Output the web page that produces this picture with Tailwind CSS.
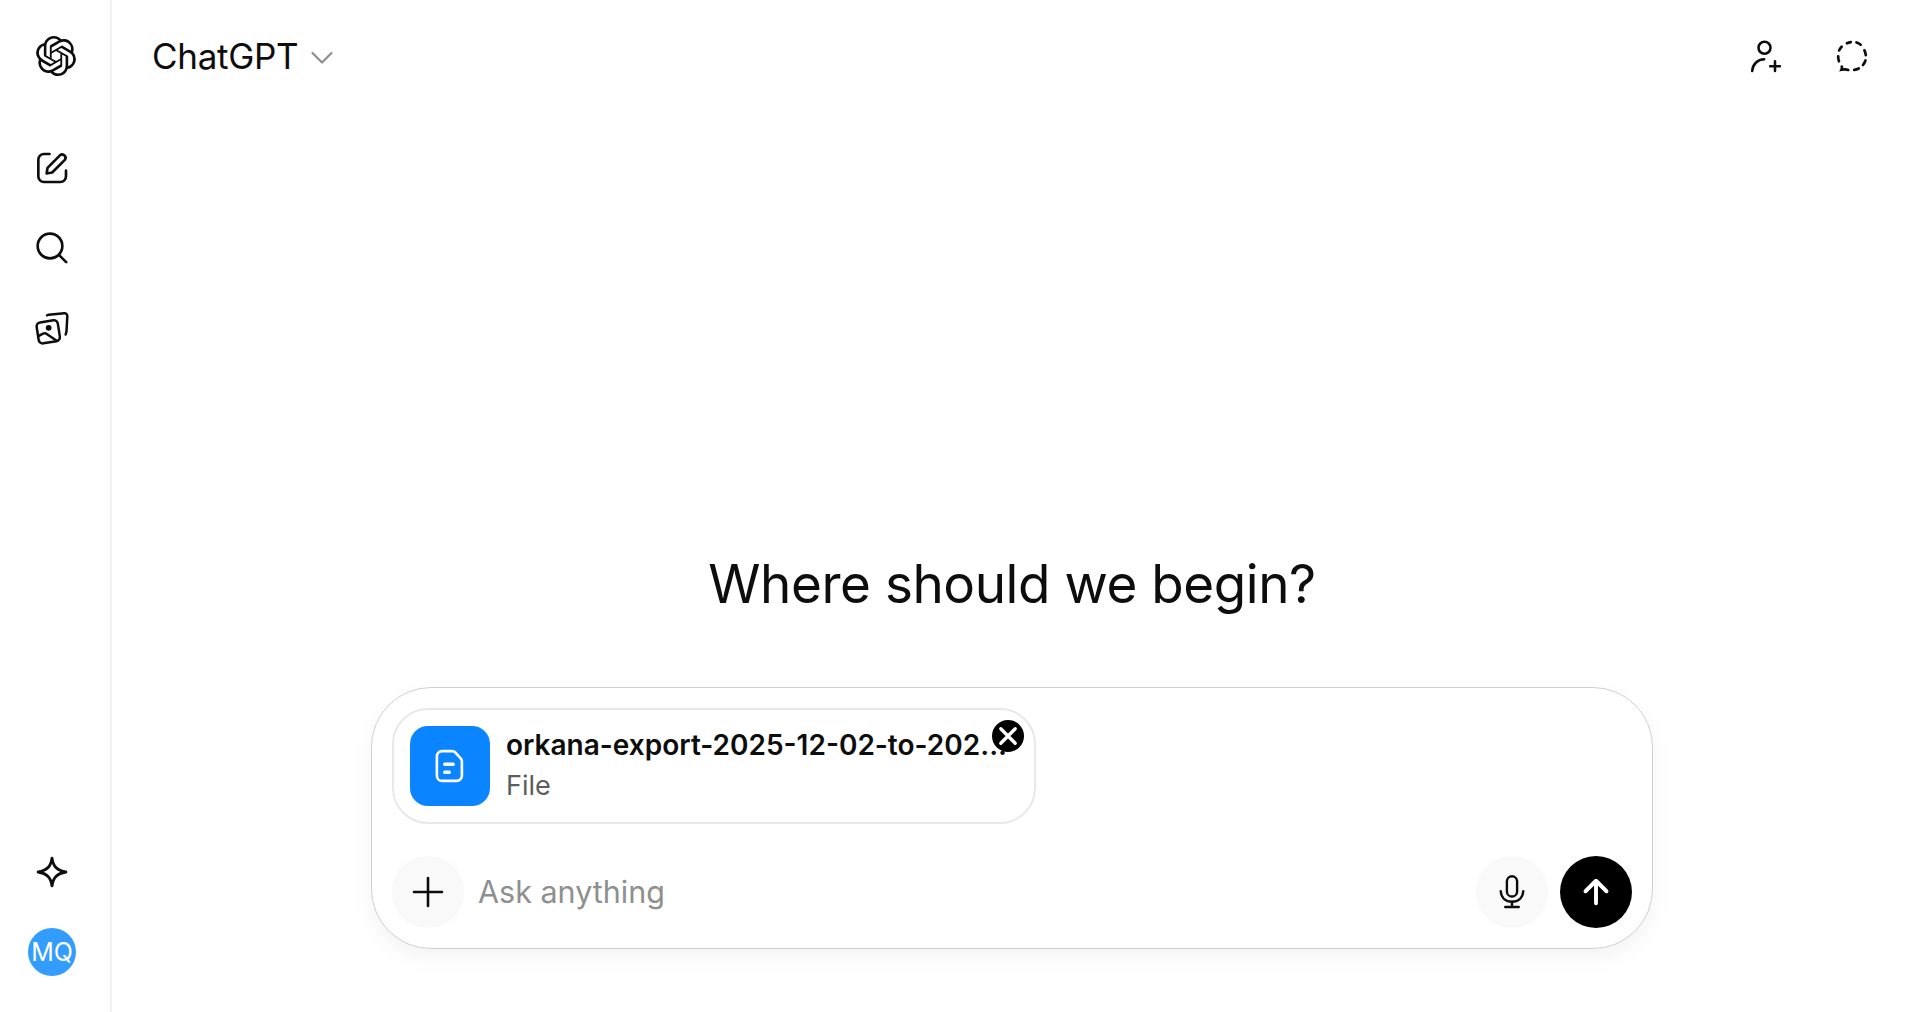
<!DOCTYPE html>
<html lang="en">
<head>
  <meta charset="UTF-8">
  <title>ChatGPT</title>
  <script src="https://cdn.jsdelivr.net/npm/@tailwindcss/browser@4"></script>
</head>
<body class="bg-white text-[#0d0d0d] font-['Inter',sans-serif] overflow-hidden">
  <div class="flex h-[1012px] w-[1912px]">

    <!-- Sidebar -->
    <aside class="w-[112px] shrink-0 border-r-2 border-[#f3f3f3] flex flex-col items-start pl-[22px] pb-[36px]">
      <div class="w-[60px] h-[40px] mt-[36px] flex justify-center pl-[8px]">
        <svg class="w-[40px] h-[40px]" viewBox="0 0 24 24" fill="#0d0d0d"><path d="M22.2819 9.8211a5.9847 5.9847 0 0 0-.5157-4.9108 6.0462 6.0462 0 0 0-6.5098-2.9A6.0651 6.0651 0 0 0 4.9807 4.1818a5.9847 5.9847 0 0 0-3.9977 2.9 6.0462 6.0462 0 0 0 .7427 7.0966 5.98 5.98 0 0 0 .511 4.9107 6.051 6.051 0 0 0 6.5146 2.9001A5.9847 5.9847 0 0 0 13.2599 24a6.0557 6.0557 0 0 0 5.7718-4.2058 5.9894 5.9894 0 0 0 3.9977-2.9001 6.0557 6.0557 0 0 0-.7475-7.0729zm-9.022 12.6081a4.4755 4.4755 0 0 1-2.8764-1.0408l.1419-.0804 4.7783-2.7582a.7948.7948 0 0 0 .3927-.6813v-6.7369l2.02 1.1686a.071.071 0 0 1 .038.052v5.5826a4.504 4.504 0 0 1-4.4945 4.4944zm-9.6607-4.1254a4.4708 4.4708 0 0 1-.5346-3.0137l.142.0852 4.783 2.7582a.7712.7712 0 0 0 .7806 0l5.8428-3.3685v2.3324a.0804.0804 0 0 1-.0332.0615L9.74 19.9502a4.4992 4.4992 0 0 1-6.1408-1.6464zM2.3408 7.8956a4.485 4.485 0 0 1 2.3655-1.9728V11.6a.7664.7664 0 0 0 .3879.6765l5.8144 3.3543-2.0201 1.1685a.0757.0757 0 0 1-.071 0l-4.8303-2.7865A4.504 4.504 0 0 1 2.3408 7.872zm16.5963 3.8558L13.1038 8.364 15.1192 7.2a.0757.0757 0 0 1 .071 0l4.8303 2.7913a4.4944 4.4944 0 0 1-.6765 8.1042v-5.6772a.79.79 0 0 0-.407-.667zm2.0107-3.0231l-.142-.0852-4.7735-2.7818a.7759.7759 0 0 0-.7854 0L9.409 9.2297V6.8974a.0662.0662 0 0 1 .0284-.0615l4.8303-2.7866a4.4992 4.4992 0 0 1 6.6802 4.66zM8.3065 12.863l-2.02-1.1638a.0804.0804 0 0 1-.038-.0567V6.0742a4.4992 4.4992 0 0 1 7.3757-3.4537l-.142.0805L8.704 5.459a.7948.7948 0 0 0-.3927.6813zm1.0976-2.3654l2.602-1.4998 2.6069 1.4998v2.9994l-2.5974 1.4997-2.6067-1.4997Z"/></svg>
      </div>

      <div class="w-[60px] mt-[72px] flex flex-col items-center gap-[40px]">
        <!-- new chat -->
        <svg class="w-[40px] h-[40px]" viewBox="0 0 24 24" fill="none" stroke="#0d0d0d" stroke-width="1.6" stroke-linecap="round" stroke-linejoin="round"><path d="M10.5 3.6H7.2a3.4 3.4 0 0 0-3.4 3.4v10a3.4 3.4 0 0 0 3.4 3.4h9.8a3.4 3.4 0 0 0 3.4-3.400v-3.400"/><path d="M8.800 15.300l.5-3.400 7.600-7.600a2 2 0 0 1 2.800 2.800l-7.600 7.600z"/></svg>
        <!-- search -->
        <svg class="w-[40px] h-[40px]" viewBox="0 0 24 24" fill="none" stroke="#0d0d0d" stroke-width="1.6" stroke-linecap="round"><circle cx="10.800" cy="10.800" r="7.400"/><path d="M16.300 16.300l4.200 4.200"/></svg>
        <!-- library -->
        <svg class="w-[40px] h-[40px]" viewBox="0 -0.600 24 24" fill="none" stroke="#0d0d0d" stroke-width="1.500" stroke-linecap="round" stroke-linejoin="round"><path d="M2.800 10.800a2.400 2.400 0 0 1 2-2.700l8-1.300a2.400 2.400 0 0 1 2.700 2l1.200 7.800a2.400 2.400 0 0 1-2 2.700l-8 1.300a2.400 2.400 0 0 1-2.700-2z"/><path d="M9 3.800l1-.4 9.300-.9a1.700 1.700 0 0 1 1.900 1.700l-.5 9.300-.5 1.800"/><circle cx="10" cy="11.300" r="1" fill="#0d0d0d"/><path d="M3.800 16.300l2.800-1.500a2 2 0 0 1 2 0l5.800 4"/></svg>
      </div>

      <div class="w-[60px] mt-auto flex flex-col items-center gap-[37px]">
        <!-- sparkle -->
        <svg class="w-[38px] h-[38px]" viewBox="0 0 24 24" fill="none" stroke="#0d0d0d" stroke-width="1.800" stroke-linejoin="round"><path d="M12 3.200c.7 5.200 3 7.800 8.800 8.800-5.800 1-8.100 3.600-8.800 8.800-.7-5.200-3-7.800-8.800-8.800 5.800-1 8.100-3.600 8.800-8.800z"/></svg>
        <div class="w-[48px] h-[48px] rounded-full bg-[#339cff] text-white text-[25px] leading-none flex items-center justify-center">MQ</div>
      </div>
    </aside>

    <!-- Main -->
    <main class="flex-1 flex flex-col min-w-0">
      <header class="h-[112px] shrink-0 flex items-start justify-between pl-[40px] pr-[42px] pt-[36px]">
        <div class="flex items-center h-[40px] gap-[12px]">
          <span class="text-[35px] leading-none tracking-[-0.3px]">ChatGPT</span>
          <svg class="w-[24px] h-[24px] mt-[3px]" viewBox="0 0 24 24" fill="none" stroke="#8f8f8f" stroke-width="2.200" stroke-linecap="round" stroke-linejoin="round"><path d="M2.500 7l9.500 9.500L21.500 7"/></svg>
        </div>
        <div class="flex items-center gap-[50px] pt-[2px]">
          <svg class="w-[36px] h-[36px]" viewBox="0 0 24 24" fill="none" stroke="#0d0d0d" stroke-width="1.700" stroke-linecap="round"><circle cx="11" cy="6.500" r="4"/><path d="M2.800 22c.3-4.500 3.400-7.600 8-7.800"/><path d="M18 15.500v6.500M14.800 18.800h6.500"/></svg>
          <svg class="w-[36px] h-[36px]" viewBox="0 0 24 24" fill="none" stroke="#0d0d0d" stroke-width="1.800" stroke-linecap="round"><path d="M8.600 3.500a9.600 9.600 0 0 1 2.600-.8"/><path d="M15 3a9.600 9.600 0 0 1 2.800 1.500"/><path d="M20.300 8.200a9.600 9.600 0 0 1 .9 3.200"/><path d="M21 15a9.600 9.600 0 0 1-1.700 3"/><path d="M16.500 20.300a9.600 9.600 0 0 1-3 1"/><path d="M9.500 21.300c-1.200-.5-2.400-.6-4.500-.2.400-.9.400-1.300.2-2"/><path d="M3.300 15.500a9.600 9.600 0 0 1-.5-3.200"/><path d="M3.400 8.300a9.600 9.600 0 0 1 1.700-2.500"/></svg>
        </div>
      </header>

      <div class="flex flex-col items-center">
        <h1 class="text-[53px] leading-[64px] font-normal tracking-[-0.45px] mt-[440px]">Where should we begin?</h1>

        <div class="mt-[71px] w-[1282px] h-[262px] rounded-[60px] border border-[#d0d0d0] bg-white shadow-[0_8px_20px_rgba(0,0,0,0.05)] px-[20px] pt-[20px] flex flex-col">
          <div class="relative w-[644px] h-[116px] rounded-[36px] border-2 border-[#e8e8e8] flex items-center pl-[16px] gap-[16px]">
            <div class="w-[80px] h-[80px] shrink-0 rounded-[18px] bg-[#0a84ff] flex items-center justify-center">
              <svg class="w-[42px] h-[42px]" viewBox="0 0 24 24" fill="none" stroke="#fff" stroke-width="1.500" stroke-linecap="round" stroke-linejoin="round"><path d="M7.500 3.500h5.800c.7 0 1.300.3 1.800.8l3 3.300c.4.500.700 1 .700 1.700v8.200a3 3 0 0 1-3 3h-8.300a3 3 0 0 1-3-3v-11a3 3 0 0 1 3-3z"/><path d="M9 11h4.800M9 15.500h2.600" stroke-width="2"/></svg>
            </div>
            <div class="min-w-0 w-[510px]">
              <div class="text-[28px] leading-[36px] font-semibold whitespace-nowrap overflow-hidden -mt-[1px]">orkana-export-2025-12-02-to-202...</div>
              <div class="text-[27px] leading-[36px] text-[#5d5d5d] mt-[5px]">File</div>
            </div>
            <div class="absolute top-[10px] right-[10px] w-[32px] h-[32px] rounded-full bg-black flex items-center justify-center">
              <svg class="w-[24px] h-[24px]" viewBox="0 0 20 20" fill="none" stroke="#fff" stroke-width="2.800" stroke-linecap="round"><path d="M4 4l12 12M16 4L4 16"/></svg>
            </div>
          </div>

          <div class="mt-[32px] flex items-center">
            <div class="w-[72px] h-[72px] rounded-full bg-[#f9f9f9] flex items-center justify-center">
              <svg class="w-[36px] h-[36px]" viewBox="0 0 36 36" fill="none" stroke="#0d0d0d" stroke-width="2.600" stroke-linecap="round"><path d="M18 4v28M4 18h28"/></svg>
            </div>
            <span class="ml-[14px] text-[30.500px] leading-none text-[#8f8f8f]">Ask anything</span>
            <div class="ml-auto w-[72px] h-[72px] rounded-full bg-[#f9f9f9] flex items-center justify-center">
              <svg class="w-[36px] h-[36px]" viewBox="0 0 24 24" fill="none" stroke="#0d0d0d" stroke-width="1.600" stroke-linecap="round"><rect x="8.600" y="1.500" width="6.800" height="13.500" rx="3.400"/><path d="M4.500 11.500c.3 4.500 3.400 7 7.500 7s7.200-2.500 7.500-7"/><path d="M12 18.500v3M7.500 22h9"/></svg>
            </div>
            <div class="ml-[12px] w-[72px] h-[72px] rounded-full bg-black flex items-center justify-center">
              <svg class="w-[36px] h-[36px]" viewBox="0 0 24 24" fill="none" stroke="#fff" stroke-width="2.600" stroke-linecap="round" stroke-linejoin="round"><path d="M12 19.500V4.500M5 11.500l7-7 7 7"/></svg>
            </div>
          </div>
        </div>
      </div>
    </main>
  </div>
</body>
</html>
